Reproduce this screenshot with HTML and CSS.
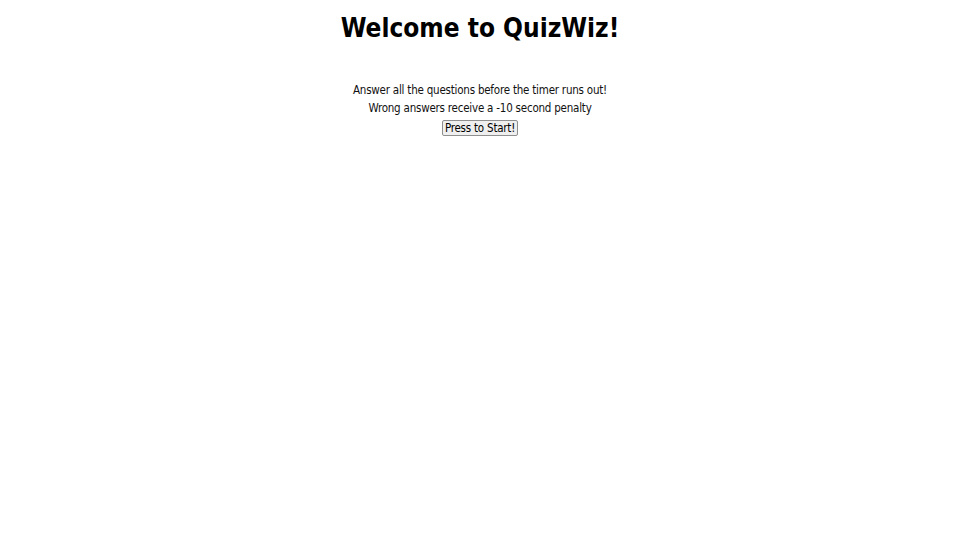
FILE: index.html
```html
<!DOCTYPE html>
<html>
<head>
<meta charset="utf-8">
<link rel="stylesheet" href="styles.css">
</head>
<body>
<header class="top">
  <h1 class="title">Welcome to QuizWiz!</h1>
</header>
<main class="intro">
  <p class="line">Answer all the questions before the timer runs out!</p>
  <p class="line">Wrong answers receive a -10 second penalty</p>
  <button class="start">Press to Start!</button>
</main>
</body>
</html>
```
FILE: styles.css
```css
body {
  margin: 0;
  font-family: "DejaVu Sans Condensed", "DejaVu Sans", sans-serif;
  color: #000;
  background: #fff;
  text-align: center;
}
.title {
  font-size: 26px;
  font-weight: bold;
  margin: 13px 0 0;
  line-height: 30px;
}
.intro {
  margin-top: 38px;
  display: flex;
  flex-direction: column;
  align-items: center;
}
.line {
  margin: 0;
  font-size: 11.5px;
  letter-spacing: -0.22px;
  line-height: 18px;
  color: #111;
}
.start {
  margin-top: 3px;
  font-family: inherit;
  font-size: 11.5px;
  letter-spacing: -0.22px;
  line-height: 14px;
  padding: 0 2px;
  color: #000;
  background: #efefef;
  border: 1px solid #8f8f8f;
  border-radius: 2px;
}
```
